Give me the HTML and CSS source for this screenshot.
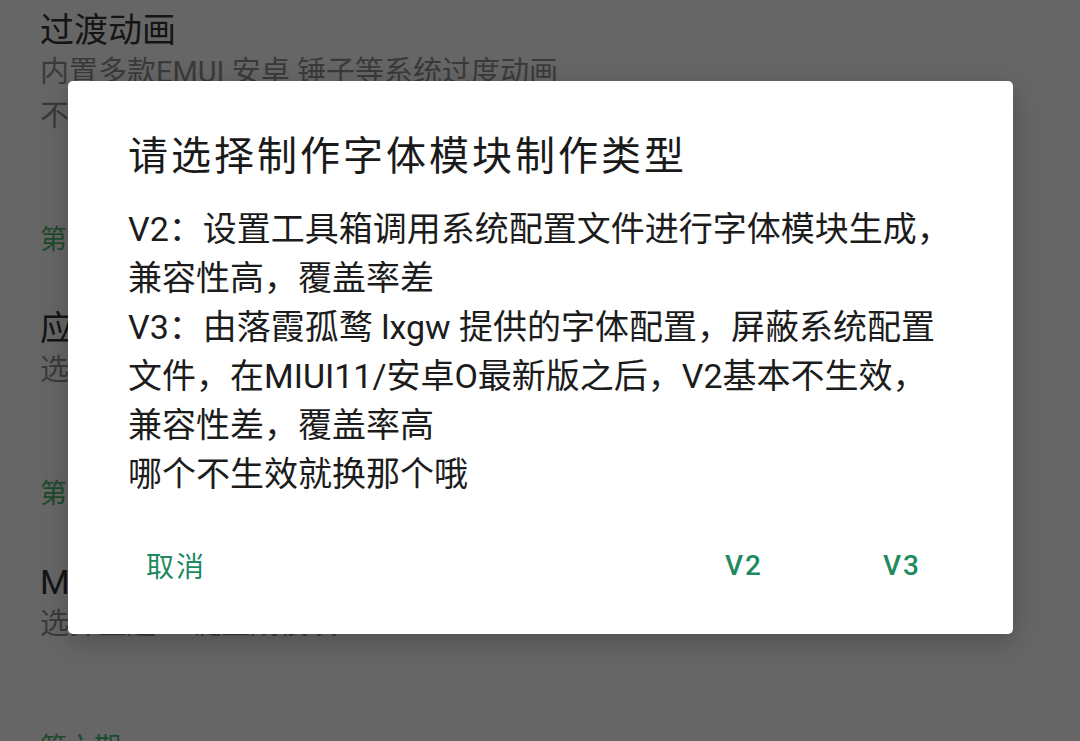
FILE: index.html
```html
<!DOCTYPE html>
<html lang="zh-CN">
<head>
  <meta charset="UTF-8">
  <title>字体模块</title>
  <link rel="stylesheet" href="styles.css">
</head>
<body>
  <div class="settings">
    <div class="item">
      <div class="item-title">过渡动画</div>
      <div class="item-sub">内置多款EMUI 安卓 锤子等系统过度动画</div>
      <div class="item-sub">不同系统可能效果不同</div>
    </div>
    <div class="group">第五期</div>
    <div class="item">
      <div class="item-title">应用字体</div>
      <div class="item-sub">选择字体后一键生成模块</div>
    </div>
    <div class="group">第四期</div>
    <div class="item">
      <div class="item-title">MIUI主题</div>
      <div class="item-sub">选择主题 一键生成模块</div>
    </div>
    <div class="group">第六期</div>
  </div>

  <div class="dialog">
    <div class="dialog-title">请选择制作字体模块制作类型</div>
    <div class="dialog-body">
      V2：设置工具箱调用系统配置文件进行字体模块生成，<br>
      兼容性高，覆盖率差<br>
      V3：由落霞孤鹜 lxgw 提供的字体配置，屏蔽系统配置<br>
      文件，在MIUI11/安卓O最新版之后，V2基本不生效，<br>
      兼容性差，覆盖率高<br>
      哪个不生效就换那个哦
    </div>
    <div class="dialog-actions">
      <span class="btn">取消</span>
      <div class="btn-group">
        <span class="btn btn-v">V2</span>
        <span class="btn btn-v">V3</span>
      </div>
    </div>
  </div>
</body>
</html>
```

FILE: styles.css
```css
body {
  margin: 0;
  height: 741px;
  overflow: hidden;
  background: #666666;
  font-family: Roboto, "Noto Sans CJK SC", sans-serif;
}
.settings {
  padding: 10px 0 0 40px;
}
.item {
  margin-bottom: 82px;
}
.item-title {
  font-size: 34px;
  line-height: 40px;
  color: #151515;
}
.item-sub {
  font-size: 29px;
  line-height: 44px;
  color: #3a3a3a;
}
.group {
  font-size: 27px;
  line-height: 40px;
  color: #1d4a2d;
  margin-bottom: 48px;
}
.dialog {
  position: absolute;
  left: 68px;
  top: 81px;
  width: 945px;
  height: 553px;
  box-sizing: border-box;
  background: #ffffff;
  border-radius: 5px;
  box-shadow: 0 8px 28px rgba(0,0,0,0.22);
  padding: 50px 0 0 60px;
}
.dialog-title {
  font-size: 40px;
  line-height: 52px;
  letter-spacing: 3px;
  color: #1a1a1a;
  margin-bottom: 22px;
}
.dialog-body {
  font-size: 34px;
  line-height: 49px;
  color: #1c1c1c;
  white-space: nowrap;
}
.dialog-actions {
  display: flex;
  justify-content: space-between;
  align-items: center;
  height: 56px;
  margin-top: 38px;
  margin-left: 18px;
  padding-right: 92px;
}
.btn {
  font-size: 28px;
  color: #1f8a5f;
  letter-spacing: 2px;
}
.btn-group {
  display: flex;
  gap: 120px;
}
.btn-v {
  font-weight: 500;
}
```
